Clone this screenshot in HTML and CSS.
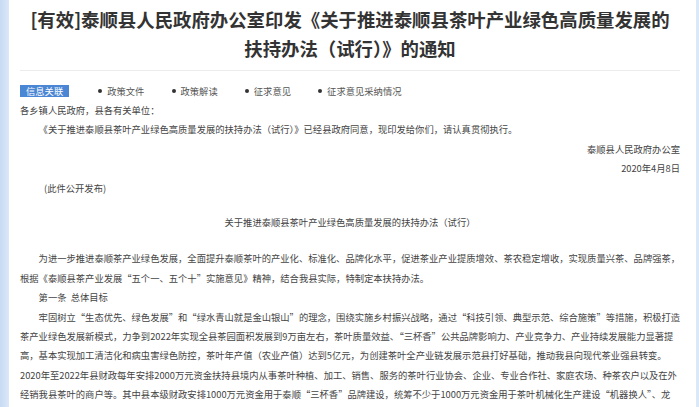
FILE: index.html
```html
<!DOCTYPE html>
<html lang="zh-CN">
<head>
<meta charset="utf-8">
<title>泰顺县人民政府办公室通知</title>
<link rel="stylesheet" href="styles.css">
</head>
<body>
<div class="page">
  <h1 class="title">[有效]泰顺县人民政府办公室印发《关于推进泰顺县茶叶产业绿色高质量发展的扶持办法（试行）》的通知</h1>
  <div class="sep"></div>
  <div class="related">
    <span class="tag">信息关联</span>
    <ul class="links">
      <li>政策文件</li>
      <li>政策解读</li>
      <li>征求意见</li>
      <li>征求意见采纳情况</li>
    </ul>
  </div>
  <div class="content">
    <p>各乡镇人民政府，县各有关单位：</p>
    <p class="indent">《关于推进泰顺县茶叶产业绿色高质量发展的扶持办法（试行）》已经县政府同意，现印发给你们，请认真贯彻执行。</p>
    <p class="right">泰顺县人民政府办公室</p>
    <p class="right">2020年4月8日</p>
    <p class="note">(此件公开发布)</p>
    <p class="center">关于推进泰顺县茶叶产业绿色高质量发展的扶持办法（试行）</p>
    <p class="indent">为进一步推进泰顺茶产业绿色发展，全面提升泰顺茶叶的产业化、标准化、品牌化水平，促进茶业产业提质增效、茶农稳定增收，实现质量兴茶、品牌强茶，<br>根据《泰顺县茶产业发展“五个一、五个十”实施意见》精神，结合我县实际，特制定本扶持办法。</p>
    <p class="indent">第一条&nbsp;&nbsp;总体目标</p>
    <p class="indent">牢固树立“生态优先、绿色发展”和“绿水青山就是金山银山”的理念，围绕实施乡村振兴战略，通过“科技引领、典型示范、综合施策”等措施，积极打造<br>茶产业绿色发展新模式，力争到2022年实现全县茶园面积发展到9万亩左右，茶叶质量效益、“三杯香”公共品牌影响力、产业竞争力、产业持续发展能力显著提<br>高，基本实现加工清洁化和病虫害绿色防控，茶叶年产值（农业产值）达到5亿元，为创建茶叶全产业链发展示范县打好基础，推动我县向现代茶业强县转变。</p>
    <p>2020年至2022年县财政每年安排2000万元资金扶持县境内从事茶叶种植、加工、销售、服务的茶叶行业协会、企业、专业合作社、家庭农场、种茶农户以及在外<br>经销我县茶叶的商户等。其中县本级财政安排1000万元资金用于泰顺“三杯香”品牌建设，统筹不少于1000万元资金用于茶叶机械化生产建设“机器换人”、龙<br>头企业培育、科技合作创新和茶园建设等。</p>
  </div>
</div>
</body>
</html>
```
FILE: styles.css
```css
html, body {
  margin: 0;
  padding: 0;
}
body {
  background: linear-gradient(to right, #c6daf3 0px, #dbe8f8 9px, #dbe8f8 100%);
  font-family: "Noto Sans CJK SC", "Microsoft YaHei", sans-serif;
  color: #444;
  height: 407px;
  overflow: hidden;
}
.page {
  background: #fff;
  margin: 0 3px 0 9px;
  padding: 5px 16px 0 11px;
  min-height: 407px;
  box-sizing: border-box;
}
.title {
  margin: 0;
  padding: 0 8px;
  font-size: 18.4px;
  line-height: 29px;
  font-weight: bold;
  color: #333;
  text-align: center;
}
.sep {
  height: 1px;
  background: #ececec;
  margin-top: 7px;
}
.related {
  display: flex;
  align-items: center;
  margin-top: 14px;
  font-size: 9.3px;
  line-height: 12px;
}
.tag {
  background: #4a86d3;
  color: #fff;
  padding: 0 6px;
  height: 12px;
  line-height: 12px;
}
.links {
  list-style: none;
  margin: 0 0 0 29px;
  padding: 0;
  display: flex;
}
.links li {
  display: flex;
  align-items: center;
  width: 73.3px;
  color: #555;
}
.links li:last-child {
  width: auto;
}
.links li::before {
  content: "";
  width: 4px;
  height: 4px;
  border-radius: 50%;
  background: #333;
  margin-right: 5px;
}
.content {
  margin-top: 4px;
  font-size: 9.3px;
  line-height: 19.4px;
}
.content p {
  margin: 0;
  white-space: nowrap;
}
.content .indent {
  text-indent: 2em;
}
.content .note {
  padding-left: 24px;
}
.content .right {
  text-align: right;
}
.content .center {
  text-align: center;
  margin: 15px 0 17px;
}
```
